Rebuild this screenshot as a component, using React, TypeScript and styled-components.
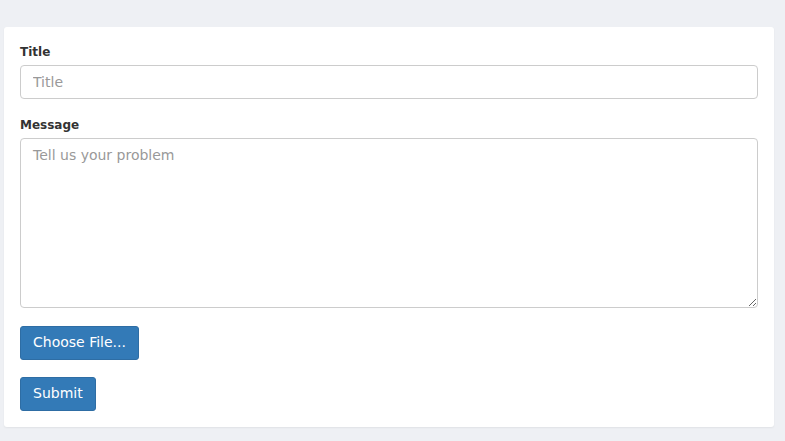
import React from "react"
import styled, { createGlobalStyle } from "styled-components"

const GlobalStyle = createGlobalStyle`
  html, body {
    margin: 0;
    padding: 0;
    background: #eef0f4;
    font-family: "DejaVu Sans", sans-serif;
  }
`

export default function App() {
  return (
    <>
      <GlobalStyle />
      <Page>
        <Card>
          <Field>
            <Label htmlFor="title">Title</Label>
            <Input id="title" placeholder="Title" />
          </Field>
          <Field>
            <Label htmlFor="message">Message</Label>
            <TextArea id="message" placeholder="Tell us your problem" />
          </Field>
          <Field>
            <Button type="button">Choose File...</Button>
          </Field>
          <Button type="submit">Submit</Button>
        </Card>
      </Page>
    </>
  )
}

const Page = styled.div`
  padding: 27px 11px 14px 4px;
`

const Card = styled.form`
  background: #fff;
  border-radius: 3px;
  box-shadow: 0 1px 2px rgba(0, 0, 0, 0.06);
  padding: 16px;
  display: flex;
  flex-direction: column;
  align-items: flex-start;
`

const Field = styled.div`
  width: 100%;
  display: flex;
  flex-direction: column;
  align-items: flex-start;
  margin-bottom: 17px;

  &:nth-child(2) {
    margin-bottom: 18px;
  }
`

const Label = styled.label`
  font-size: 12px;
  font-weight: bold;
  color: #333;
  line-height: 17px;
  padding-top: 1px;
  margin-bottom: 4px;
`

const Input = styled.input`
  box-sizing: border-box;
  width: 100%;
  height: 34px;
  padding: 6px 12px;
  font-family: "DejaVu Sans", sans-serif;
  font-size: 14px;
  color: #555;
  border: 1px solid #ccc;
  border-radius: 4px;
  outline: none;

  &::placeholder {
    color: #999;
  }
`

const TextArea = styled.textarea`
  box-sizing: border-box;
  width: 100%;
  height: 170px;
  padding: 6px 12px;
  font-family: "DejaVu Sans", sans-serif;
  font-size: 14px;
  line-height: 20px;
  color: #555;
  border: 1px solid #ccc;
  border-radius: 4px;
  outline: none;
  resize: vertical;

  &::placeholder {
    color: #999;
  }
`

const Button = styled.button`
  box-sizing: border-box;
  height: 34px;
  padding: 5px 12px 7px;
  font-family: "DejaVu Sans", sans-serif;
  font-size: 14px;
  color: #fff;
  background: #337ab7;
  border: 1px solid #2e6da4;
  border-radius: 3px;
  cursor: pointer;
`
